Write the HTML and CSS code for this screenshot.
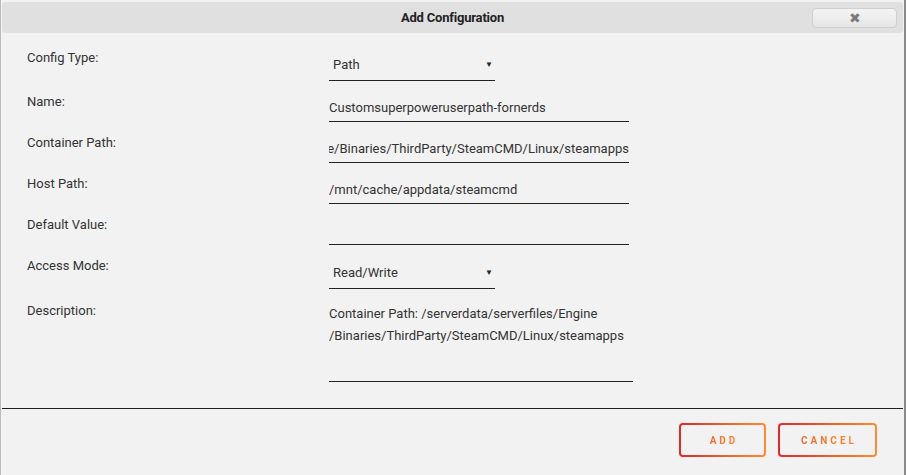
FILE: index.html
```html
<!DOCTYPE html>
<html>
<head>
    <title>Add Configuration</title>
    <link rel="stylesheet" href="styles.css">
</head>
<body>
<div class="dialog">
    <div class="titlebar">
        <span class="title">Add Configuration</span>
        <button class="close-btn" type="button">&#10006;</button>
    </div>
    <form class="config-form">
        <div class="row row-select">
            <label>Config Type:</label>
            <div class="field select-field">
                <span class="value">Path</span>
                <span class="caret">&#9660;</span>
            </div>
        </div>
        <div class="row">
            <label>Name:</label>
            <div class="field text-field"><span class="value">Customsuperpoweruserpath-fornerds</span></div>
        </div>
        <div class="row">
            <label>Container Path:</label>
            <div class="field text-field scrolled"><span class="value">/serverdata/serverfiles/Engine/Binaries/ThirdParty/SteamCMD/Linux/steamapps</span></div>
        </div>
        <div class="row">
            <label>Host Path:</label>
            <div class="field text-field"><span class="value">/mnt/cache/appdata/steamcmd</span></div>
        </div>
        <div class="row">
            <label>Default Value:</label>
            <div class="field text-field"><span class="value"></span></div>
        </div>
        <div class="row row-select">
            <label>Access Mode:</label>
            <div class="field select-field">
                <span class="value">Read/Write</span>
                <span class="caret">&#9660;</span>
            </div>
        </div>
        <div class="row row-tall">
            <label>Description:</label>
            <div class="field textarea-field">Container Path: /serverdata/serverfiles/Engine<br>/Binaries/ThirdParty/SteamCMD/Linux/steamapps</div>
        </div>
    </form>
    <hr class="divider">
    <div class="actions">
        <button class="btn" type="button"><span>ADD</span></button>
        <button class="btn btn-wide" type="button"><span>CANCEL</span></button>
    </div>
</div>
</body>
</html>
```

FILE: styles.css
```css
html, body {
	margin: 0;
	height: 100%;
}

body {
	background-color: #f2f2f2;
	font-family: Roboto, "Open Sans", sans-serif;
	font-size: 13px;
	color: #333333;
}

.dialog {
	height: 100%;
	box-sizing: border-box;
	border-left: 1px solid #bbbbbb;
	border-right: 2px solid #8a8a8a;
	padding: 2px 1px 0 1px;
}

.titlebar {
	position: relative;
	height: 31px;
	background-color: #e0e0e0;
	border-radius: 4px;
	display: flex;
	align-items: center;
	justify-content: center;
}

.title {
	font-weight: bold;
	font-size: 13px;
	color: #222222;
	letter-spacing: -0.2px;
}

.close-btn {
	position: absolute;
	right: 6px;
	top: 6px;
	width: 85px;
	height: 20px;
	border: 1px solid #cfcfcf;
	border-radius: 4px;
	background: linear-gradient(#f4f4f4, #e6e6e6);
	color: #7a7a7a;
	font-size: 14px;
	line-height: 18px;
	padding: 0;
	cursor: pointer;
}

.config-form {
	padding: 16px 0 0 25px;
}

.row {
	display: flex;
	height: 41px;
}

.row-select {
	height: 44px;
}

.row-tall {
	height: auto;
}

.row label {
	width: 302px;
	line-height: 16px;
	padding-top: 1px;
}

.row-tall label {
	padding-top: 2px;
}

.field {
	box-sizing: border-box;
	border-bottom: 1px solid #222222;
	height: 29px;
	display: flex;
	align-items: center;
	white-space: nowrap;
	overflow: hidden;
}

.select-field {
	width: 166px;
	height: 32px;
	padding: 0 0 0 4px;
	justify-content: space-between;
}

.caret {
	font-size: 8px;
	margin-right: 2px;
	color: #222222;
}

.text-field {
	width: 300px;
	padding-top: 1px;
}

.scrolled {
	justify-content: flex-end;
}

.textarea-field {
	width: 304px;
	height: 81px;
	display: block;
	white-space: normal;
	line-height: 22px;
	padding-top: 2px;
}

.divider {
	border: none;
	border-top: 1px solid #1e1e1e;
	margin: 26px 0 0 0;
}

.actions {
	display: flex;
	justify-content: flex-end;
	gap: 12px;
	padding: 14px 26px 0 0;
}

.btn {
	height: 34px;
	width: 87px;
	padding: 0;
	border: 2px solid transparent;
	border-radius: 4px;
	background: linear-gradient(#f2f2f2, #f2f2f2) padding-box,
		linear-gradient(90deg, #e22828, #ff8c2f) border-box;
	font-family: Roboto, sans-serif;
	font-size: 10px;
	font-weight: bold;
	letter-spacing: 3px;
	cursor: pointer;
}

.btn-wide {
	width: 99px;
}

.btn span {
	background: linear-gradient(90deg, #f0622a, #ff8c2f);
	-webkit-background-clip: text;
	background-clip: text;
	color: transparent;
	padding-left: 3px;
}
```
